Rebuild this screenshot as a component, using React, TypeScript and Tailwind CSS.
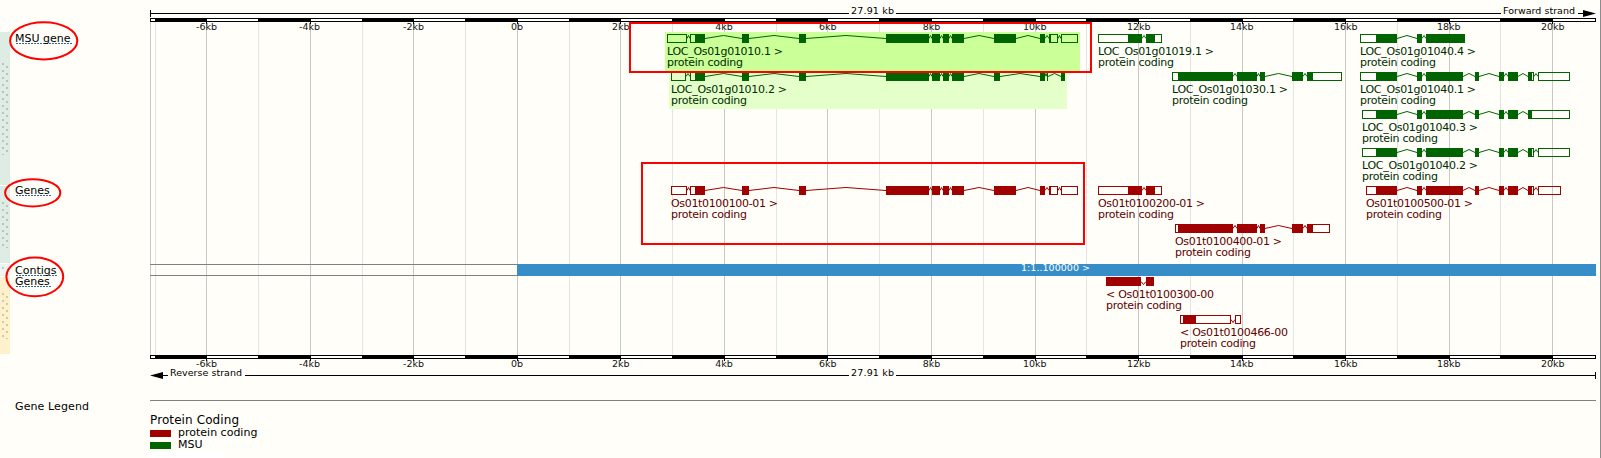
import React from "react";

const GREEN = "#006400";
const RED = "#a00000";
const GREEN_TEXT = "#002c00";
const RED_TEXT = "#600000";
const FONT = "'DejaVu Sans', sans-serif";

// A block is [start, end, filled]; adjoining blocks touch, gaps become introns.
type Block = [number, number, 0 | 1];
type Gene = { y: number; x: number; label: string; w: number; color: string; ink: string; down?: boolean; blocks: Block[] };

const core: Block[] = [
  [690, 696, 0], [695, 705, 1], [742, 749, 1], [799, 806, 1], [886, 929, 1],
  [932, 940, 1], [943, 949, 1], [952, 964, 1],
];
const tail: Block[] = [[994, 1016, 1], [1040, 1045, 1], [1049, 1051, 1], [1050, 1058, 0], [1061, 1078, 0]];
const small: Block[] = [[1098, 1129, 0], [1128, 1142, 1], [1146, 1155, 1], [1154, 1162, 0]];
const mid: Block[] = [[1178, 1233, 1], [1237, 1257, 1], [1260, 1265, 1], [1292, 1303, 1], [1307, 1313, 1]];
const right: Block[] = [
  [1376, 1397, 1], [1417, 1422, 1], [1426, 1463, 1], [1475, 1479, 1], [1499, 1504, 1],
  [1508, 1518, 1], [1528, 1532, 1],
];

const g = { color: GREEN, ink: GREEN_TEXT };
const r = { color: RED, ink: RED_TEXT };

const GENES: Gene[] = [
  { ...g, y: 34, x: 667, w: 116, label: "LOC_Os01g01010.1 >", blocks: [[667, 687, 0], ...core, ...tail] },
  { ...g, y: 72, x: 671, w: 116, label: "LOC_Os01g01010.2 >", blocks: [[671, 686, 0], ...core, [994, 1000, 1], [1040, 1045, 1], [1047, 1048, 1], [1061, 1065, 1]] },
  { ...g, y: 34, x: 1098, w: 116, label: "LOC_Os01g01019.1 >", blocks: small },
  { ...g, y: 72, x: 1172, w: 116, label: "LOC_Os01g01030.1 >", blocks: [[1172, 1179, 0], ...mid, [1312, 1342, 0]] },
  { ...g, y: 34, x: 1360, w: 116, label: "LOC_Os01g01040.4 >", blocks: [[1360, 1377, 0], [1376, 1397, 1], [1417, 1422, 1], [1426, 1465, 1]] },
  { ...g, y: 72, x: 1360, w: 116, label: "LOC_Os01g01040.1 >", blocks: [[1360, 1377, 0], ...right, [1531, 1534, 0], [1538, 1570, 0]] },
  { ...g, y: 110, x: 1362, w: 116, label: "LOC_Os01g01040.3 >", blocks: [[1362, 1377, 0], ...right, [1531, 1570, 0]] },
  { ...g, y: 148, x: 1362, w: 116, label: "LOC_Os01g01040.2 >", blocks: [[1362, 1377, 0], ...right, [1531, 1534, 0], [1538, 1570, 0]] },
  { ...r, y: 186, x: 671, w: 107, label: "Os01t0100100-01 >", blocks: [[671, 687, 0], ...core, ...tail] },
  { ...r, y: 186, x: 1098, w: 107, label: "Os01t0100200-01 >", blocks: small },
  { ...r, y: 224, x: 1175, w: 107, label: "Os01t0100400-01 >", blocks: [[1175, 1179, 0], ...mid, [1312, 1330, 0]] },
  { ...r, y: 186, x: 1366, w: 107, label: "Os01t0100500-01 >", blocks: [[1366, 1377, 0], ...right, [1531, 1534, 0], [1538, 1561, 0]] },
  { ...r, y: 277, x: 1106, w: 108, down: true, label: "< Os01t0100300-00", blocks: [[1106, 1141, 1], [1146, 1154, 1]] },
  { ...r, y: 315, x: 1180, w: 108, down: true, label: "< Os01t0100466-00", blocks: [[1180, 1184, 0], [1183, 1196, 1], [1195, 1231, 0], [1235, 1241, 0]] },
];

const GRID = [155, 206, 258, 310, 362, 413, 465, 517, 569, 620, 672, 724, 776, 827, 879, 931, 983, 1035, 1086, 1138, 1190, 1242, 1293, 1345, 1397, 1449, 1500, 1552];
const TICKS: [string, number][] = [
  ["-6kb", 206.5], ["-4kb", 309.5], ["-2kb", 413.5], ["0b", 517], ["2kb", 620.7], ["4kb", 724], ["6kb", 827.7],
  ["8kb", 931.5], ["10kb", 1034.7], ["12kb", 1138.7], ["14kb", 1241.7], ["16kb", 1345.7], ["18kb", 1448.7], ["20kb", 1552.7],
];

function GeneModel({ gene }: { gene: Gene }) {
  const { y, blocks, color } = gene;
  return (
    <g>
      {blocks.map(([a, b, filled], i) => {
        const next = blocks[i + 1];
        const gap = next && next[0] > b;
        return (
          <g key={i}>
            {filled ? (
              <rect x={a} y={y} width={b - a} height={9} fill={color} />
            ) : (
              <rect x={a + 0.5} y={y + 0.5} width={b - a - 1} height={8} fill="none" stroke={color} />
            )}
            {gap && (
              <path
                d={`M${b} ${y + 4.5} L${(b + next[0]) / 2} ${gene.down ? y + 7.5 : y + 1.5} L${next[0]} ${y + 4.5}`}
                fill="none"
                stroke={color}
              />
            )}
          </g>
        );
      })}
      <text x={gene.x} y={y + 21} fontSize={11} textLength={gene.w} fill={gene.ink}>{gene.label}</text>
      <text x={gene.x} y={y + 32} fontSize={11} textLength={76} fill={gene.ink}>protein coding</text>
    </g>
  );
}

function Ruler({ y, label }: { y: number; label: number }) {
  return (
    <g>
      <rect x={150} y={y} width={1446} height={4} fill="#000" />
      <rect x={151} y={y + 1} width={4} height={2} fill="#fff" />
      {TICKS.map(([t, center], i) => {
        const from = GRID[i * 2 + 1] + 1;
        const to = GRID[i * 2 + 2] ?? 1595;
        return (
          <g key={t}>
            <rect x={from} y={y + 1} width={to - from} height={2} fill="#fff" />
            <rect x={from - 1} y={y + 4} width={1} height={2} fill="#000" />
            <text x={center} y={label} fontSize={9.5} textAnchor="middle" fill="#111">{t}</text>
          </g>
        );
      })}
    </g>
  );
}

function GenomeTracks() {
  return (
    <svg viewBox="150 0 1446 400" className="block h-[400px] w-[1446px]" fontFamily={FONT}>
      <rect x={150} y={22} width={1} height={333} fill="#c8c8c8" />
      {GRID.map((x, i) => (
        <rect key={x} x={x} y={22} width={1} height={333} fill={i % 2 ? "#c8c8c8" : "#e4e4e4"} />
      ))}
      <rect x={669} y={70} width={398} height={39} fill="#e5ffcb" />
      <rect x={665} y={32} width={415} height={39} fill="#cbff98" />

      <g fill="#000" fontSize={9.5}>
        <rect x={150} y={13} width={699} height={1} />
        <rect x={896} y={13} width={605} height={1} />
        <rect x={1578} y={13} width={6} height={1} />
        <rect x={150} y={10} width={1} height={7} />
        <path d="M1583 10 L1596 13.5 L1583 17Z" />
        <text x={851} y={14} textLength={43}>27.91 kb</text>
        <text x={1503} y={14} textLength={72}>Forward strand</text>
        <path d="M163 372 L150 375.5 L163 379Z" />
        <rect x={162} y={375} width={6} height={1} />
        <rect x={245} y={375} width={604} height={1} />
        <rect x={896} y={375} width={700} height={1} />
        <rect x={1595} y={372} width={1} height={7} />
        <text x={170} y={376} textLength={72}>Reverse strand</text>
        <text x={851} y={376} textLength={43}>27.91 kb</text>
      </g>
      <Ruler y={18} label={30} />
      <Ruler y={355} label={367} />

      <rect x={150} y={264} width={367} height={1} fill="#808080" />
      <rect x={150} y={275} width={367} height={1} fill="#808080" />
      <rect x={517} y={264} width={1079} height={12} fill="#368dc8" />
      <text x={1021} y={271} fontSize={9.5} textLength={69} fill="#fff">1:1..100000 &gt;</text>
      {GENES.map((gene) => (
        <GeneModel key={gene.label} gene={gene} />
      ))}
    </svg>
  );
}

// Draggable handle of a track group, with its two staggered columns of grip dots.
function Grip({ tone, height, top, bottom }: { tone: string; height: number; top: number; bottom: number }) {
  const dots: React.ReactNode[] = [];
  for (let y = top; y < bottom; y += 7) {
    dots.push(<rect key={`a${y}`} x={2} y={y} width={2} height={Math.min(2, bottom - y)} />);
    if (y + 3 < bottom) dots.push(<rect key={`b${y}`} x={6} y={y + 3} width={2} height={Math.min(2, bottom - y - 3)} />);
  }
  return (
    <div className={tone}>
      <svg width={10} height={height} className="block" fill="#000" fillOpacity={0.17}>{dots}</svg>
    </div>
  );
}

const UNDERLINE = "h-px bg-[repeating-linear-gradient(90deg,#336699_0_2px,transparent_2px_3px)]";

function TrackLabel({ text, className, line }: { text: string; className: string; line: string }) {
  return (
    <div className={className}>
      <div className="h-[11px] pt-px text-[11px] leading-[11px] whitespace-nowrap">{text}</div>
      <div className={`ml-px ${UNDERLINE} ${line}`} />
    </div>
  );
}

export default function App() {
  return (
    <div className="relative flex h-[458px] w-[1601px] overflow-hidden bg-[#fffef9] font-['DejaVu_Sans',sans-serif] text-black">
      <div className="flex w-[10px] flex-col gap-px pt-8">
        <Grip tone="bg-[#deede3]" height={153} top={31} bottom={123} />
        <Grip tone="bg-[#deede3]" height={77} top={16} bottom={62} />
        <Grip tone="bg-[#edf3f2]" height={12} top={3} bottom={5} />
        <Grip tone="bg-[#fff1cc]" height={77} top={16} bottom={62} />
      </div>
      <div className="flex w-[140px] flex-col pl-[5px]">
        <TrackLabel text="MSU gene" className="mt-8" line="w-[56px]" />
        <TrackLabel text="Genes" className="mt-[140px]" line="w-[35px]" />
        <TrackLabel text="Contigs" className="mt-[68px]" line="w-[41px]" />
        <TrackLabel text="Genes" className="-mt-px" line="w-[35px]" />
        <div className="mt-[114px] text-[11px] leading-[11px] tracking-[0.11px]">Gene Legend</div>
      </div>
      <div className="flex w-[1446px] flex-col">
        <GenomeTracks />
        <div className="h-px bg-[#808080]" />
        <div className="mt-[13px] h-[13px] text-[12px] leading-[12px] tracking-[0.1px]">Protein Coding</div>
        <div className="flex h-3 items-center gap-[7px]">
          <div className="h-[7px] w-[21px] bg-[#a00000]" />
          <div className="text-[11px] leading-[12px]">protein coding</div>
        </div>
        <div className="flex h-3 items-center gap-[7px]">
          <div className="h-[7px] w-[21px] bg-[#006400]" />
          <div className="text-[11px] leading-[12px]">MSU</div>
        </div>
        <div className="mt-px h-[6px] w-[75px] bg-white" />
      </div>
      <div className="ml-auto w-px bg-[#8c8c8c]" />

      <svg className="absolute inset-0 h-[458px] w-[1601px]" fill="none" stroke="#ff0000" strokeWidth={2}>
        <ellipse cx={43.7} cy={40.8} rx={33.6} ry={18.6} />
        <ellipse cx={32.7} cy={192.8} rx={27.6} ry={13.6} />
        <ellipse cx={34.8} cy={276.8} rx={28.4} ry={19.4} />
        <rect x={630} y={23} width={461} height={49} />
        <rect x={642} y={163} width={442} height={81} />
      </svg>
    </div>
  );
}
